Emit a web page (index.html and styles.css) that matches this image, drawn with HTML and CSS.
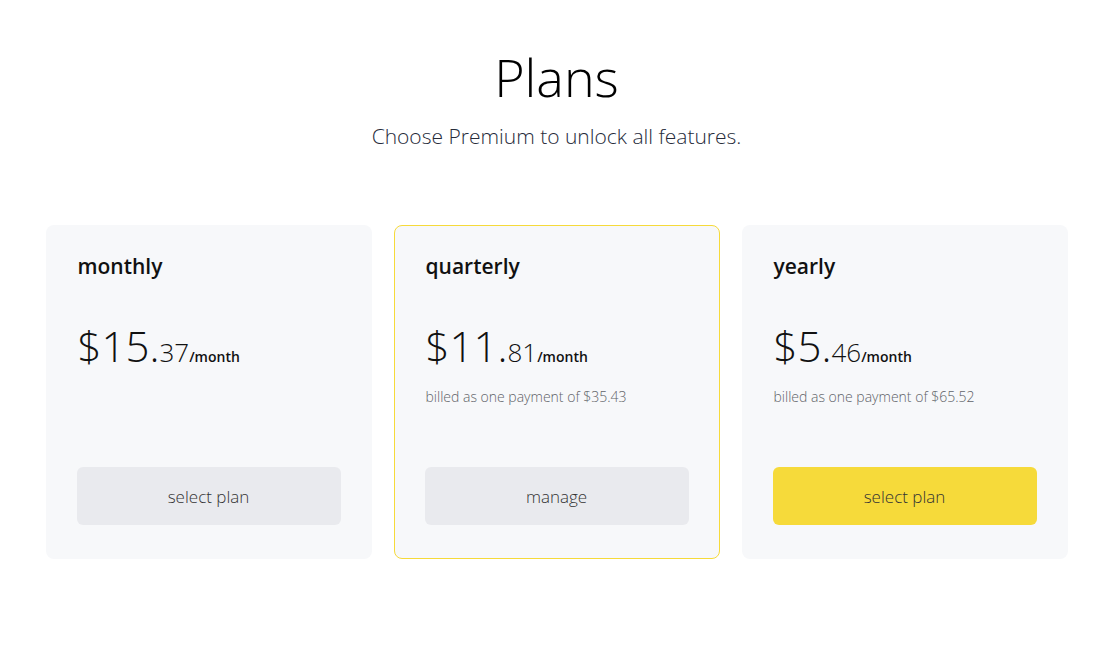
FILE: index.html
```html
<!DOCTYPE html>
<html lang="en">
<head>
  <meta charset="UTF-8">
  <meta name="viewport" content="width=device-width, initial-scale=1">
  <title>Plans</title>
  <link rel="stylesheet" href="styles.css">
</head>
<body>
  <div class="page">
    <header class="intro">
      <h1>Plans</h1>
      <p>Choose Premium to unlock all features.</p>
    </header>

    <div class="plans">
      <div class="plan">
        <div class="plan-name">monthly</div>
        <div class="price">
          <span class="whole">$15.</span><span class="cents">37</span><span class="period">/month</span>
        </div>
        <button class="btn">select plan</button>
      </div>

      <div class="plan current">
        <div class="plan-name">quarterly</div>
        <div class="price">
          <span class="whole">$11.</span><span class="cents">81</span><span class="period">/month</span>
        </div>
        <div class="billed">billed as one payment of $35.43</div>
        <button class="btn">manage</button>
      </div>

      <div class="plan">
        <div class="plan-name">yearly</div>
        <div class="price">
          <span class="whole">$5.</span><span class="cents">46</span><span class="period">/month</span>
        </div>
        <div class="billed">billed as one payment of $65.52</div>
        <button class="btn btn-primary">select plan</button>
      </div>
    </div>
  </div>
</body>
</html>
```

FILE: styles.css
```css
:root {
  --card-bg: #f7f8fa;
  --btn-bg: #e9eaee;
  --yellow: #f6da3a;
  --text: #111;
  --muted: #5f6368;
}

html, body {
  margin: 0;
  padding: 0;
  background: #fff;
  color: var(--text);
  font-family: 'Open Sans', 'Noto Sans', sans-serif;
}

.page {
  max-width: 1022px;
  margin: 0 auto;
  padding: 42px 0 0 1px;
}

.intro {
  text-align: center;
}

.intro h1 {
  margin: 0;
  font-size: 52px;
  font-weight: 300;
  line-height: 70px;
  color: #000;
}

.intro p {
  margin: 9px 0 0;
  font-size: 21px;
  font-weight: 300;
  line-height: 30px;
  color: #262b3a;
}

.plans {
  display: grid;
  grid-template-columns: repeat(3, 1fr);
  gap: 22px;
  margin-top: 74px;
}

.plan {
  background: var(--card-bg);
  border: 1px solid transparent;
  border-radius: 8px;
  padding: 24px 30px 33px 30px;
  height: 334px;
  box-sizing: border-box;
  display: flex;
  flex-direction: column;
}

.plan.current {
  border-color: var(--yellow);
}

.plan-name {
  padding-left: 1px;
  font-size: 21px;
  font-weight: 600;
  line-height: 32px;
}

.price {
  margin-top: 36px;
  padding-left: 1px;
  line-height: 56px;
  white-space: nowrap;
}

.whole {
  font-size: 42px;
  font-weight: 300;
}

.cents {
  font-size: 26px;
  font-weight: 300;
}

.period {
  font-size: 14px;
  font-weight: 600;
}

.billed {
  margin-top: 2px;
  padding-left: 1px;
  font-size: 14px;
  font-weight: 300;
  color: var(--muted);
}

.btn {
  margin-top: auto;
  height: 58px;
  border: none;
  border-radius: 6px;
  background: var(--btn-bg);
  font-family: inherit;
  font-size: 17px;
  font-weight: 300;
  color: #333;
  cursor: pointer;
}

.btn-primary {
  background: var(--yellow);
}
```
